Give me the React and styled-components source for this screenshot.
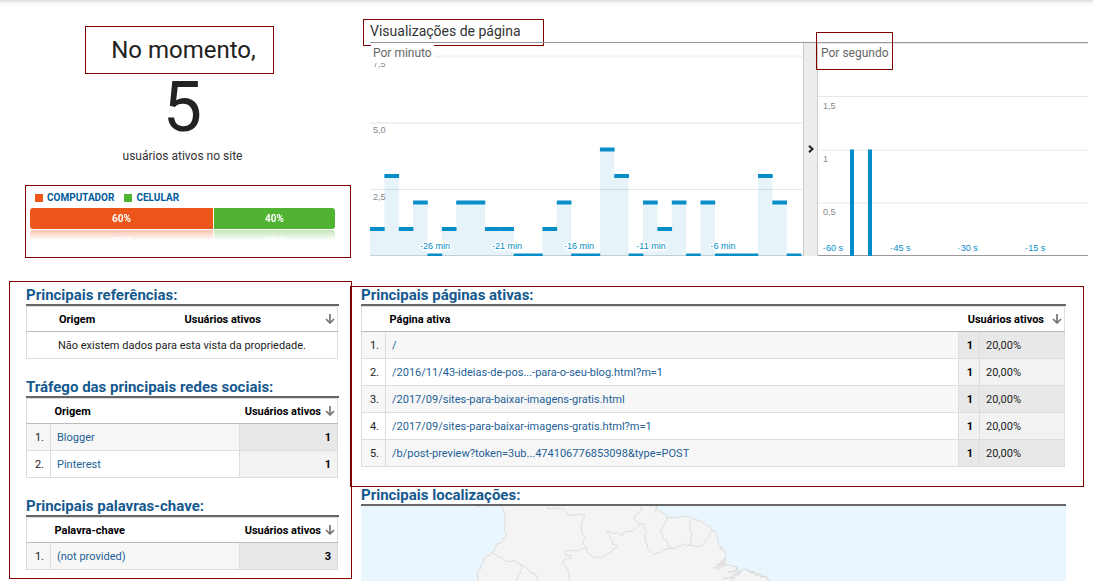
import React from "react";
import styled, { createGlobalStyle } from "styled-components";

const minuteViews = [
  1, 3, 1, 2, 0, 1, 2, 2, 1, 1, 0, 0, 1, 2, 0, 0, 4, 3, 0, 2, 1, 2, 0, 2, 0, 0,
  0, 3, 2, 0,
];

const socialRows = [
  { name: "Blogger", users: 1 },
  { name: "Pinterest", users: 1 },
];

const keywordRows = [{ name: "(not provided)", users: 3 }];

const pageRows = [
  { path: "/", users: 1, share: "20,00%" },
  {
    path: "/2016/11/43-ideias-de-pos...-para-o-seu-blog.html?m=1",
    users: 1,
    share: "20,00%",
  },
  {
    path: "/2017/09/sites-para-baixar-imagens-gratis.html",
    users: 1,
    share: "20,00%",
  },
  {
    path: "/2017/09/sites-para-baixar-imagens-gratis.html?m=1",
    users: 1,
    share: "20,00%",
  },
  {
    path: "/b/post-preview?token=3ub...474106776853098&type=POST",
    users: 1,
    share: "20,00%",
  },
];

const SortLabel = ({ gap }) => (
  <SortButton type="button" $gap={gap}>
    Usuários ativos
    <svg width="10" height="10" viewBox="0 0 10 10" aria-hidden="true">
      <path
        d="M5 0V9M1 5L5 9L9 5"
        fill="none"
        stroke="#757575"
        strokeWidth="1.7"
      />
    </svg>
  </SortButton>
);

const MinuteChart = () => {
  const slot = 14.37;
  const base = 212.5;
  const unit = 26.5;
  return (
    <ChartSvg viewBox="0 0 433 213" role="img" aria-label="Por minuto">
      <path d="M0 13.5H432M0 80H432" stroke="#f1f1f1" strokeWidth="2" />
      <path d="M0 146.5H432" stroke="#e6e6e6" />
      <AxisText x="3" y="24">7,5</AxisText>
      <AxisText x="3" y="90">5,0</AxisText>
      <AxisText x="3" y="157">2,5</AxisText>
      <path d="M0 212.5H433" stroke="#cfd4d6" />
      {minuteViews.map((views, i) => (
        <g key={i}>
          <rect
            x={i * slot}
            y={base - views * unit}
            width={slot}
            height={views * unit}
            fill="#058dc7"
            fillOpacity="0.1"
          />
          <rect
            x={i * slot}
            y={base - views * unit - 2}
            width={slot + 0.3}
            height="4"
            fill="#058dc7"
          />
        </g>
      ))}
      {[26, 21, 16, 11, 6].map((minute, i) => (
        <TimeText key={minute} x={65 + i * 72} y="206" textAnchor="middle">
          -{minute} min
        </TimeText>
      ))}
    </ChartSvg>
  );
};

const SecondChart = () => (
  <ChartSvg viewBox="0 0 270 213" role="img" aria-label="Por segundo">
    <path d="M0 0.5H270M0 53.5H270M0 107H270M0 160H270" stroke="#e8e8e8" />
    <AxisText x="5" y="66">1,5</AxisText>
    <AxisText x="5" y="119">1</AxisText>
    <AxisText x="5" y="172">0,5</AxisText>
    <path d="M0 212.5H270" stroke="#999" />
    <rect x="32" y="106.5" width="4" height="106.5" fill="#058dc7" />
    <rect x="50" y="106.5" width="4" height="106.5" fill="#058dc7" />
    {[60, 45, 30, 15].map((second, i) => (
      <TimeText key={second} x={5 + i * 67.4} y="208">
        -{second} s
      </TimeText>
    ))}
  </ChartSvg>
);

const LocationMap = () => (
  <MapSvg
    viewBox="0 0 705 75"
    preserveAspectRatio="xMinYMin slice"
    role="img"
    aria-label="Mapa da América do Sul"
  >
    <g
      transform="translate(89 -3) scale(0.3333)"
      stroke="#dcdcdc"
      strokeWidth="3"
      strokeLinejoin="round"
      fill="none"
    >
      <path
        fill="#f4f4f4"
        d="M153 0V9L160 20L162 28L167 33L164 45L166 54L162 60L165 70L162 82L172 91L165 100L158 110L157 118L140 123L135 135L134 143L126 148L122 155L103 165L100 180L92 188L90 200L82 210L84 225L80 250H970L960 234L951 226L946 220L939 221L934 213L922 214L916 207L900 204L893 199L880 198L870 204L866 210L856 222L842 236L850 222L862 207L863 192L846 190L835 184L822 184L827 170V155L822 140L813 132L805 120L801 98L798 95L795 84L788 82L780 72L764 63L752 54L727 47L720 42L705 40L683 43L655 44L652 40L640 30L620 18L619 0Z"
      />
      <path d="M78 9L82 11L91 10" />
      <path d="M126 148L140 157L150 164L158 166L165 173L180 176L192 173L200 178L212 184L217 194L211 202L210 212L203 221L195 238" />
      <path d="M210 184L222 188L228 195L236 198L240 208L258 215L260 224L268 238" />
      <path d="M290 9L292 16H340L348 26L358 38L378 35L403 35L402 48L394 58V80L398 93L407 103L401 109L400 117L396 121L406 127L410 135L413 150L423 155L430 166L445 160L450 166L462 157L485 146L488 138L502 134L500 127L487 124L486 110L480 101L478 92L468 84L482 86L485 91L506 90L512 96L518 96L520 88L548 83L560 74L568 66L566 59L552 50L555 37L569 27L572 20L577 18L572 9" />
      <path d="M410 135L400 136L385 143H346L347 158L361 156L364 167L344 168L340 175L341 186L352 196L357 208L358 238" />
      <path d="M568 62L580 61L583 78L589 83L585 95L586 118L592 124L593 137L606 150L612 155L620 150L632 148L635 142L645 140L660 136H678L682 129L692 130L703 122L712 128L728 126L736 130L755 131L766 114L788 82" />
      <path d="M652 40L650 48L644 64L632 82L631 88L637 92L638 106L650 112L654 124L665 138" />
      <path d="M727 47L719 58L721 68L718 78L725 86L726 97L722 105L723 117L717 128" />
      <path d="M619 9L617 30" />
      <path
        strokeWidth="4"
        d="M827 165L818 176L812 186L804 182L800 192L790 196M822 170L812 178L806 196L800 199M835 184L820 187L812 194M808 188L826 177M813 132L812 138L819 136M863 192L856 205L840 207L832 205M870 204L842 224L818 227M876 198L866 218M893 199L900 208L912 210L920 217L928 213L932 221L948 220L955 231"
      />
    </g>
  </MapSvg>
);

const App = () => {
  return (
    <>
      <GlobalStyle />
      <Page>
        <SideColumn>
          <Counter>
            <NowTitle>No momento,</NowTitle>
            <ActiveCount>5</ActiveCount>
            <CountLabel>usuários ativos no site</CountLabel>
          </Counter>

          <DeviceBox>
            <Legend>
              <LegendItem $color="#ed561b">COMPUTADOR</LegendItem>
              <LegendItem $color="#50b432">CELULAR</LegendItem>
            </Legend>
            <DeviceBar>
              <DeviceShare $color="#ed561b" $share="60%">
                60%
              </DeviceShare>
              <DeviceShare $color="#50b432">40%</DeviceShare>
            </DeviceBar>
          </DeviceBox>

          <SidePanel>
            <Section>
              <SectionTitle>Principais referências:</SectionTitle>
              <DataTable>
                <thead>
                  <tr>
                    <HeadCell $width="154px" $indent="32px">
                      Origem
                    </HeadCell>
                    <HeadCell>
                      <SortLabel gap="auto" />
                    </HeadCell>
                  </tr>
                </thead>
                <tbody>
                  <tr>
                    <EmptyCell colSpan="2">
                      Não existem dados para esta vista da propriedade.
                    </EmptyCell>
                  </tr>
                </tbody>
              </DataTable>
            </Section>

            <Section>
              <SectionTitle>Tráfego das principais redes sociais:</SectionTitle>
              <UsersTable label="Origem" rows={socialRows} />
            </Section>

            <Section>
              <SectionTitle>Principais palavras-chave:</SectionTitle>
              <UsersTable label="Palavra-chave" rows={keywordRows} />
            </Section>
          </SidePanel>
        </SideColumn>

        <MainColumn>
          <ChartTitle>Visualizações de página</ChartTitle>
          <Charts>
            <ChartPane>
              <PaneLabel>Por minuto</PaneLabel>
              <MinuteChart />
            </ChartPane>
            <Splitter type="button" aria-label="Recolher">
              <svg width="6" height="8" viewBox="0 0 6 8" aria-hidden="true">
                <path
                  d="M1 0.7L4.5 4L1 7.3"
                  fill="none"
                  stroke="#222"
                  strokeWidth="2"
                />
              </svg>
            </Splitter>
            <ChartPane>
              <MarkedLabel>Por segundo</MarkedLabel>
              <SecondChart />
            </ChartPane>
          </Charts>

          <PagesPanel>
            <SectionTitle>Principais páginas ativas:</SectionTitle>
            <DataTable>
              <colgroup>
                <Column $width="24px" />
                <Column />
                <Column $width="21px" />
                <Column $width="85px" />
              </colgroup>
              <thead>
                <tr>
                  <HeadCell />
                  <HeadCell>Página ativa</HeadCell>
                  <HeadCell colSpan="2">
                    <SortLabel gap="8px" />
                  </HeadCell>
                </tr>
              </thead>
              <tbody>
                {pageRows.map((row, index) => (
                  <Row key={row.path}>
                    <RankCell>{index + 1}.</RankCell>
                    <Cell>
                      <CellLink href="#">{row.path}</CellLink>
                    </Cell>
                    <CountCell>{row.users}</CountCell>
                    <ShareCell>{row.share}</ShareCell>
                  </Row>
                ))}
              </tbody>
            </DataTable>
          </PagesPanel>

          <Locations>
            <SectionTitle>Principais localizações:</SectionTitle>
            <LocationMap />
          </Locations>
        </MainColumn>
      </Page>
    </>
  );
};
export default App;

const UsersTable = ({ label, rows }) => (
  <DataTable>
    <thead>
      <tr>
        <HeadCell $width="24px" />
        <HeadCell>{label}</HeadCell>
        <HeadCell $width="98px">
          <SortLabel gap="4px" />
        </HeadCell>
      </tr>
    </thead>
    <tbody>
      {rows.map((row, index) => (
        <Row key={row.name}>
          <RankCell>{index + 1}.</RankCell>
          <Cell>
            <CellLink href="#">{row.name}</CellLink>
          </Cell>
          <CountCell>{row.users}</CountCell>
        </Row>
      ))}
    </tbody>
  </DataTable>
);

const GlobalStyle = createGlobalStyle`
  body {
    margin: 0;
    background-color: #fff;
    color: #222;
    font-family: Roboto, "Liberation Sans", sans-serif;
    font-size: 11px;
  }
  * {
    box-sizing: border-box;
  }
`;

const Page = styled.main`
  display: grid;
  grid-template-columns: 350px minmax(0, 1fr);
  align-items: start;
  background: linear-gradient(#dcdcdc, #f6f6f6 3px, #fff 7px) no-repeat;
`;

const SideColumn = styled.div`
  padding: 26px 0 0 9px;
`;

const MainColumn = styled.div`
  padding: 19px 5px 0 0;
`;

const Counter = styled.div`
  display: flex;
  flex-direction: column;
  align-items: center;
  padding-left: 6px;
`;

const NowTitle = styled.h1`
  margin: 0 6px 0 0;
  padding: 0 17px 0 25px;
  border: 1px solid #800000;
  font-size: 24px;
  font-weight: 400;
  line-height: 46px;
`;

const ActiveCount = styled.div`
  font-size: 70px;
  line-height: 66px;
`;

const CountLabel = styled.div`
  margin-top: 8px;
  font-size: 12px;
  line-height: 16px;
  color: #333;
`;

const DeviceBox = styled.div`
  width: 326px;
  height: 73px;
  margin: 21px 0 0 16px;
  padding: 4px 15px 0 4px;
  border: 1px solid #800000;
`;

const Legend = styled.div`
  display: flex;
  gap: 10px;
  padding-left: 5px;
  margin-bottom: 2px;
`;

const LegendItem = styled.span`
  display: flex;
  align-items: center;
  gap: 4px;
  color: #005c9c;
  font-size: 10px;
  font-weight: 700;
  line-height: 16px;

  &::before {
    content: "";
    width: 8px;
    height: 8px;
    background-color: ${(props) => props.$color};
  }
`;

const DeviceBar = styled.div`
  display: flex;
  gap: 1px;
  border-radius: 3px;
  overflow: hidden;
  -webkit-box-reflect: below 1px
    linear-gradient(transparent 50%, rgba(0, 0, 0, 0.35));
`;

const DeviceShare = styled.div`
  flex: ${(props) => (props.$share ? `0 0 ${props.$share}` : "1")};
  background-color: ${(props) => props.$color};
  color: #fff;
  font-size: 10px;
  font-weight: 700;
  line-height: 21px;
  text-align: center;
`;

const SidePanel = styled.div`
  margin: 23px -2px 0 0;
  padding: 5px 12px 8px 16px;
  border: 1px solid #800000;
`;

const Section = styled.section`
  & + & {
    margin-top: 20px;
  }
`;

const SectionTitle = styled.h2`
  margin: 0;
  border-bottom: 2px solid #666;
  color: #15598f;
  font-size: 15px;
  font-weight: 700;
  line-height: 17px;
`;

const DataTable = styled.table`
  width: calc(100% - 1px);
  border: 1px solid #ddd;
  border-collapse: collapse;
  table-layout: fixed;
`;

const Column = styled.col`
  width: ${(props) => props.$width || "auto"};
`;

const HeadCell = styled.th`
  width: ${(props) => props.$width || "auto"};
  height: 25px;
  padding: 0 2px 0 ${(props) => props.$indent || "4px"};
  border-bottom: 1px solid #bbb;
  color: #000;
  font-weight: 700;
  text-align: left;
`;

const SortButton = styled.button`
  display: flex;
  align-items: center;
  justify-content: ${(props) =>
    props.$gap === "auto" ? "space-between" : "flex-end"};
  gap: ${(props) => (props.$gap === "auto" ? "4px" : props.$gap)};
  width: 100%;
  padding: 0;
  border: 0;
  background: none;
  color: inherit;
  font: inherit;
  white-space: nowrap;
  cursor: pointer;
`;

const Cell = styled.td`
  height: 27px;
  padding: 0 6px;
  border: 1px solid #ddd;
`;

const RankCell = styled(Cell)`
  text-align: right;
`;

const CountCell = styled(Cell)`
  background-color: #f2f2f2;
  color: #000;
  font-weight: 700;
  text-align: right;
`;

const ShareCell = styled(Cell)`
  background-color: #f2f2f2;
`;

const EmptyCell = styled(Cell)`
  padding: 0;
  text-align: center;
`;

const Row = styled.tr`
  &:nth-child(odd) {
    background-color: #f7f7f7;
  }
  &:nth-child(odd) ${CountCell}, &:nth-child(odd) ${ShareCell} {
    background-color: #e8e8e8;
  }
`;

const CellLink = styled.a`
  color: #245f96;
  text-decoration: none;
`;

const ChartTitle = styled.h2`
  width: 181px;
  margin: 0 0 -4px 13px;
  padding: 0 6px 3px;
  border: 1px solid #800000;
  color: #333;
  font-size: 14px;
  font-weight: 400;
  line-height: 22px;
  white-space: nowrap;
`;

const Charts = styled.div`
  display: grid;
  grid-template-columns: 433fr 15px 270fr;
  margin-left: 20px;
  border-top: 1px solid #999;
`;

const ChartPane = styled.div`
  position: relative;
  min-width: 0;
`;

const ChartSvg = styled.svg`
  display: block;
  width: 100%;
  height: auto;
`;

const AxisText = styled.text`
  fill: #888;
  font-family: "Liberation Sans", Arial, sans-serif;
  font-size: 9px;
`;

const TimeText = styled(AxisText)`
  fill: #058dc7;
  stroke: #fff;
  stroke-width: 3px;
  paint-order: stroke;
`;

const PaneLabel = styled.div`
  position: absolute;
  top: 0;
  left: 1px;
  padding: 0 2px;
  background-color: #fff;
  color: #666;
  font-size: 12px;
  line-height: 20px;
`;

const MarkedLabel = styled(PaneLabel)`
  top: -11px;
  left: -2px;
  padding: 10px 3px 6px 4px;
  border: 1px solid #800000;
  background: none;
`;

const Splitter = styled.button`
  display: flex;
  align-items: center;
  justify-content: center;
  padding: 0 0 2px;
  border: solid #ccc;
  border-width: 0 1px;
  background-color: #ededed;
  cursor: pointer;
`;

const PagesPanel = styled.section`
  margin: 30px 4px 0 0;
  padding: 0 17px 19px 10px;
  border: 1px solid #800000;
`;

const Locations = styled.section`
  margin: 0 22px 0 11px;
`;

const MapSvg = styled.svg`
  display: block;
  width: 100%;
  height: 75px;
  background-color: #e9f6fe;
`;
